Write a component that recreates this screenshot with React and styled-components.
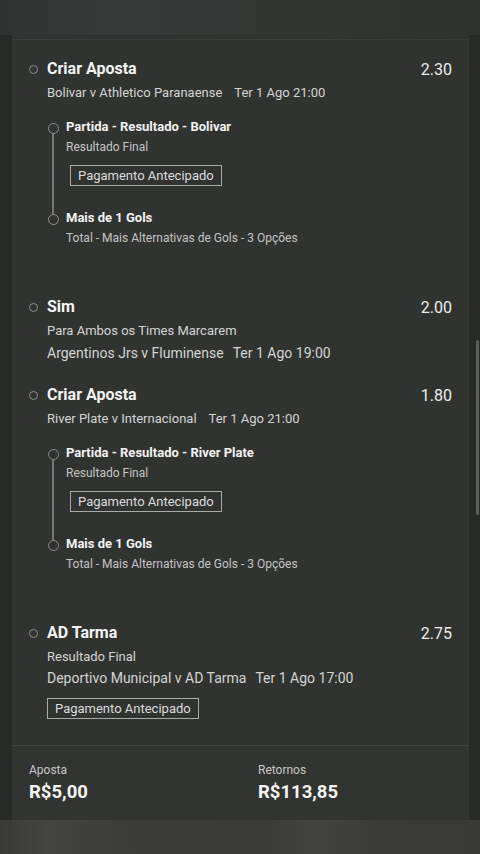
import styled, { createGlobalStyle } from "styled-components";

const GlobalStyle = createGlobalStyle`
  html, body {
    margin: 0;
    padding: 0;
    background: #282a28;
    font-family: Roboto, "Liberation Sans", sans-serif;
  }
  * { box-sizing: border-box; }
`;

const Screen = styled.div`
  position: relative;
  width: 480px;
  height: 854px;
  display: flex;
  flex-direction: column;
  background: #282a28;
  overflow: hidden;
`;

const TopBand = styled.div`
  height: 35px;
  flex-shrink: 0;
  background: linear-gradient(90deg, #303331 0%, #373a38 25%, #323532 60%, #2f3330 100%);
`;

const Panel = styled.div`
  flex: 1;
  margin: 0 11px 0 12px;
  display: flex;
  flex-direction: column;
  background: #313331;
  padding-top: 4px;
`;

const PanelTop = styled.div`
  border-top: 1px solid #3a3d3a;
`;

const List = styled.div`
  flex: 1;
  padding-bottom: 21px;
`;

const Item = styled.div`
  display: grid;
  grid-template-columns: 35px 1fr auto;
  padding: 19px 17px ${p => p.tail || 3}px 0;
`;

const Radio = styled.div`
  width: 9px;
  height: 9px;
  border: 1.5px solid #8b8d8b;
  border-radius: 50%;
  margin: 6px 0 0 17px;
`;

const Body = styled.div`
  display: flex;
  flex-direction: column;
`;

const Title = styled.div`
  font-size: 16px;
  line-height: 20px;
  font-weight: 700;
  color: #f4f4f4;
`;

const Odds = styled.div`
  font-size: 16px;
  line-height: 20px;
  color: #ececec;
  padding-top: 1px;
`;

const Line = styled.div`
  font-size: ${p => (p.big ? "14px" : "13px")};
  line-height: 18px;
  color: #d4d4d4;
  margin-top: ${p => p.gap || 4}px;
  white-space: nowrap;
`;

const When = styled.span`
  margin-left: ${p => p.space || 10}px;
`;

const Badge = styled.div`
  align-self: flex-start;
  margin: ${p => p.top || 10}px 0 0 ${p => p.indent || 0}px;
  height: 21px;
  padding: 0 7px;
  border: 1px solid #a9aba9;
  font-size: 13px;
  line-height: 19px;
  color: #dcdcdc;
`;

const Legs = styled.div`
  position: relative;
  margin: 16px 0 29px 19px;
  display: flex;
  flex-direction: column;
  gap: 23px;

  &::before {
    content: "";
    position: absolute;
    left: -14px;
    top: 14px;
    height: 86px;
    width: 2px;
    background: #757775;
  }
`;

const Leg = styled.div`
  display: flex;
  flex-direction: column;
`;

const LegTitle = styled.div`
  position: relative;
  font-size: 13px;
  line-height: 18px;
  font-weight: 700;
  color: #f2f2f2;

  &::before {
    content: "";
    position: absolute;
    left: -18px;
    top: 5px;
    width: 9px;
    height: 9px;
    border: 1.5px solid #8e908e;
    border-radius: 50%;
    background: #313331;
    z-index: 1;
  }
`;

const LegSub = styled.div`
  font-size: 12px;
  line-height: 16px;
  color: #c4c4c4;
  margin-top: 3px;
  white-space: nowrap;
`;

const Summary = styled.div`
  border-top: 1px solid #424442;
  display: grid;
  grid-template-columns: 229px 1fr;
  padding: 16px 17px 0;
  height: 75px;
  flex-shrink: 0;
  background: #323432;
`;

const SumCell = styled.div`
  display: flex;
  flex-direction: column;
`;

const SumLabel = styled.div`
  font-size: 12px;
  line-height: 16px;
  color: #c8c8c8;
`;

const SumValue = styled.div`
  font-size: 18.5px;
  line-height: 22px;
  font-weight: 700;
  color: #f4f4f4;
  margin-top: 3px;
`;

const BottomBand = styled.div`
  height: 34px;
  flex-shrink: 0;
  background: linear-gradient(90deg, #393a38 0%, #444542 10%, #3c3d3b 25%, #3a3b39 55%, #434441 65%, #3a3b39 80%, #393a38 100%);
`;

const Scrollbar = styled.div`
  position: absolute;
  right: 1px;
  top: 340px;
  width: 3px;
  height: 175px;
  border-radius: 2px;
  background: #5d5e5c;
`;

const PAY = "Pagamento Antecipado";

const Selection = ({ title, odds, tail, children }) => (
  <Item tail={tail}>
    <Radio />
    <Body>
      <Title>{title}</Title>
      {children}
    </Body>
    <Odds>{odds}</Odds>
  </Item>
);

const BuilderLegs = ({ pick }) => (
  <Legs>
    <Leg>
      <LegTitle>Partida - Resultado - {pick}</LegTitle>
      <LegSub>Resultado Final</LegSub>
      <Badge indent={4}>{PAY}</Badge>
    </Leg>
    <Leg>
      <LegTitle>Mais de 1 Gols</LegTitle>
      <LegSub>Total - Mais Alternativas de Gols - 3 Opções</LegSub>
    </Leg>
  </Legs>
);

export default function App() {
  return (
    <Screen>
      <GlobalStyle />
      <TopBand />
      <Panel>
        <PanelTop />
        <List>
          <Selection title="Criar Aposta" odds="2.30">
            <Line gap={5}>
              Bolivar v Athletico Paranaense<When space={12}>Ter 1 Ago 21:00</When>
            </Line>
            <BuilderLegs pick="Bolivar" />
          </Selection>
          <Selection title="Sim" odds="2.00" tail={4}>
            <Line gap={5}>Para Ambos os Times Marcarem</Line>
            <Line big>
              Argentinos Jrs v Fluminense<When space={9}>Ter 1 Ago 19:00</When>
            </Line>
          </Selection>
          <Selection title="Criar Aposta" odds="1.80">
            <Line gap={5}>
              River Plate v Internacional<When space={12}>Ter 1 Ago 21:00</When>
            </Line>
            <BuilderLegs pick="River Plate" />
          </Selection>
          <Selection title="AD Tarma" odds="2.75">
            <Line gap={5}>Resultado Final</Line>
            <Line big gap={3}>
              Deportivo Municipal v AD Tarma<When space={9}>Ter 1 Ago 17:00</When>
            </Line>
            <Badge top={11}>{PAY}</Badge>
          </Selection>
        </List>
        <Summary>
          <SumCell>
            <SumLabel>Aposta</SumLabel>
            <SumValue>R$5,00</SumValue>
          </SumCell>
          <SumCell>
            <SumLabel>Retornos</SumLabel>
            <SumValue>R$113,85</SumValue>
          </SumCell>
        </Summary>
      </Panel>
      <BottomBand />
      <Scrollbar />
    </Screen>
  );
}
